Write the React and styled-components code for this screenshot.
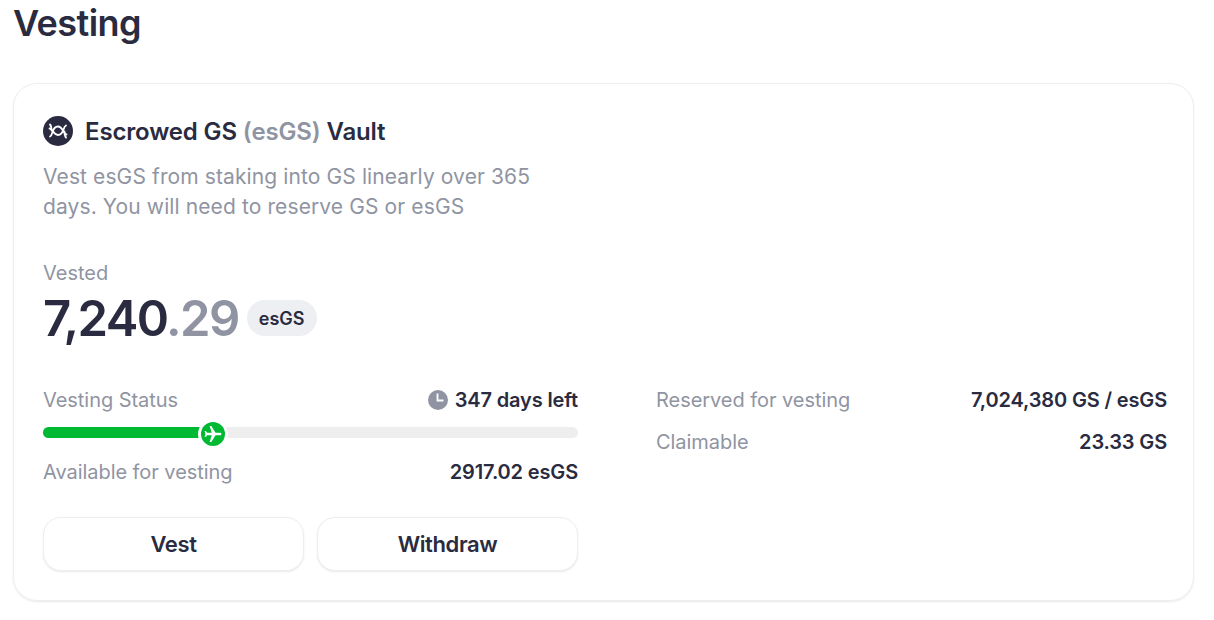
import React from 'react';
import styled, { createGlobalStyle } from 'styled-components';

const GlobalStyle = createGlobalStyle`
  * {
    box-sizing: border-box;
  }

  body {
    margin: 0;
    background: #fff;
    color: #2a2b40;
    font-family: Inter, sans-serif;
    font-size: 20px;
    font-weight: 400;
  }
`;

const Page = styled.main`
  height: 620px;
  padding: 0 20px 0 13px;
  overflow: hidden;
`;

const PageTitle = styled.h1`
  margin: 0 0 37px;
  height: 46px;
  line-height: 46px;
  font-size: 36px;
  font-weight: 600;
  letter-spacing: -.55px;
`;

const Card = styled.section`
  height: 518px;
  padding: 30px 26px 29px 29px;
  border: 1px solid #eeeeef;
  border-radius: 24px;
  box-shadow: 0 1px 2px rgba(39, 42, 63, .1);
`;

const VaultHeader = styled.div`
  display: flex;
  align-items: center;
  gap: 12px;
  height: 34px;
`;

const VaultName = styled.h2`
  margin: 0;
  font-size: 24px;
  font-weight: 600;
  letter-spacing: -.15px;
  white-space: nowrap;
`;

const Muted = styled.span`
  color: #9094a2;
`;

const Description = styled.p`
  width: 510px;
  margin: 14px 0 0;
  color: #9094a2;
  font-size: 21px;
  letter-spacing: .11px;
  line-height: 30px;
  white-space: nowrap;
`;

const VestedLabel = styled.div`
  margin-top: 38px;
  height: 26px;
  line-height: 26px;
  color: #9094a2;
`;

const VestedAmount = styled.div`
  display: flex;
  align-items: center;
  gap: 8px;
  height: 64px;
`;

const Amount = styled.span`
  font-size: 49px;
  font-weight: 600;
  letter-spacing: -1.6px;
`;

const Token = styled.span`
  height: 36px;
  padding: 0 12px;
  border-radius: 18px;
  background: #eeeff2;
  font-size: 18px;
  font-weight: 600;
  line-height: 37px;
`;

const Details = styled.div`
  display: grid;
  grid-template-columns: 535px 1fr;
  column-gap: 78px;
  margin-top: 35px;
`;

const Row = styled.div`
  display: flex;
  align-items: center;
  justify-content: space-between;
  height: 30px;
  margin-top: ${props => props.$top || 0}px;
  letter-spacing: -.05px;
  white-space: nowrap;
`;

const Value = styled.span`
  display: flex;
  align-items: center;
  gap: 7px;
  font-weight: 600;
  letter-spacing: -.15px;
`;

const Track = styled.div`
  position: relative;
  height: 11px;
  margin: 12px 0 19px;
  border-radius: 6px;
  background: #eeeeef;
`;

const Fill = styled.div`
  height: 100%;
  border-radius: 6px;
  background: #00b933;
`;

const Marker = styled.span`
  position: absolute;
  top: -8px;
  display: flex;
  width: 30px;
  height: 30px;
  margin-left: -15px;
`;

const Actions = styled.div`
  display: grid;
  grid-template-columns: 1fr 1fr;
  gap: 13px;
  margin-top: 30px;
`;

const Button = styled.button`
  height: 54px;
  padding: 0;
  border: 1px solid #eeeeef;
  border-radius: 18px;
  background: #fff;
  box-shadow: 0 1px 2px rgba(39, 42, 63, .1);
  color: inherit;
  font: 600 22px Inter, sans-serif;
  letter-spacing: -.4px;
`;

const VaultIcon = () => (
  <svg width="30" height="30" viewBox="0 0 30 30" fill="none">
    <circle cx="15" cy="15" r="15" fill="#2a2b40" />
    <g stroke="#fff" strokeWidth="1.8" strokeLinecap="round">
      <path d="M7 20.5C10.500 19 8.500 10.500 15 10.500c5 0 5 7.500 8.500 8" />
      <path d="M6.500 12.500c3.500 0 3.500 6.500 8.500 6.500 6.500 0 4.500-8 8-9.500" />
      <path d="M7 8.500c1.500 1.500 1.500 3.500 1.500 6M23 21.500c-1.500-1.500-1.500-3.500-1.500-6" />
    </g>
  </svg>
);

const ClockIcon = () => (
  <svg width="20" height="20" viewBox="0 0 20 20" fill="none">
    <circle cx="10" cy="10" r="10" fill="#9094a2" />
    <path d="M9.5 3.5v7h6" stroke="#fff" strokeWidth="1.8" />
  </svg>
);

const PlaneIcon = () => (
  <svg width="30" height="30" viewBox="0 0 30 30">
    <circle cx="15" cy="15" r="15" fill="#fff" />
    <circle cx="15" cy="15" r="12" fill="#00b933" />
    <path
      transform="translate(15 15) rotate(90) scale(.84) translate(-11.5 -12)"
      d="M21 16v-2l-8-5V3.5a1.5 1.5 0 0 0-3 0V9l-8 5v2l8-2.5V19l-2 1.5V22l3.5-1 3.5 1v-1.5L13 19v-5.5z"
      fill="#fff"
    />
  </svg>
);

export default function App() {
  const progress = 170;

  return (
    <Page>
      <GlobalStyle />
      <PageTitle>Vesting</PageTitle>
      <Card>
        <VaultHeader>
          <VaultIcon />
          <VaultName>Escrowed GS <Muted>(esGS)</Muted> Vault</VaultName>
        </VaultHeader>
        <Description>
          Vest esGS from staking into GS linearly over 365
          <br />
          days. You will need to reserve GS or esGS
        </Description>
        <VestedLabel>Vested</VestedLabel>
        <VestedAmount>
          <Amount>7,240<Muted>.29</Muted></Amount>
          <Token>esGS</Token>
        </VestedAmount>
        <Details>
          <div>
            <Row>
              <Muted>Vesting Status</Muted>
              <Value><ClockIcon />347 days left</Value>
            </Row>
            <Track>
              <Fill style={{ width: progress }} />
              <Marker style={{ left: progress }}><PlaneIcon /></Marker>
            </Track>
            <Row>
              <Muted>Available for vesting</Muted>
              <Value>2917.02 esGS</Value>
            </Row>
            <Actions>
              <Button>Vest</Button>
              <Button>Withdraw</Button>
            </Actions>
          </div>
          <div>
            <Row>
              <Muted>Reserved for vesting</Muted>
              <Value>7,024,380 GS / esGS</Value>
            </Row>
            <Row $top={12}>
              <Muted>Claimable</Muted>
              <Value>23.33 GS</Value>
            </Row>
          </div>
        </Details>
      </Card>
    </Page>
  );
}
